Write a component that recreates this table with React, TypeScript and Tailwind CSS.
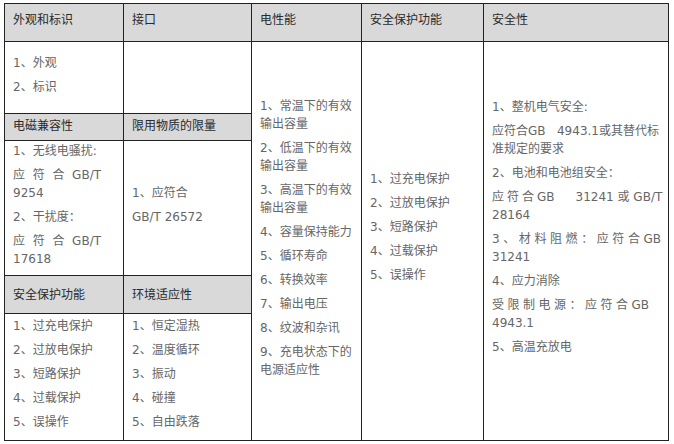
import type { ReactNode } from "react";

type Line = { text: ReactNode; cls?: string };
type Para = Line[];

const l = (text: ReactNode, cls?: string): Line => ({ text, cls });

const col3: Para[] = [
  [l("1、常温下的有效"), l("输出容量")],
  [l("2、低温下的有效"), l("输出容量")],
  [l("3、高温下的有效"), l("输出容量")],
  [l("4、容量保持能力")],
  [l("5、循环寿命")],
  [l("6、转换效率")],
  [l("7、输出电压")],
  [l("8、纹波和杂讯")],
  [l("9、充电状态下的"), l("电源适应性")],
];

const protect: Para[] = [
  [l("1、过充电保护")],
  [l("2、过放电保护")],
  [l("3、短路保护")],
  [l("4、过载保护")],
  [l("5、误操作")],
];

const env: Para[] = [
  [l("1、恒定湿热")],
  [l("2、温度循环")],
  [l("3、振动")],
  [l("4、碰撞")],
  [l("5、自由跌落")],
];

const emc: Para[] = [
  [l("1、无线电骚扰:")],
  [l("应符合GB/T", "w-[88px] [text-align-last:justify]"), l("9254")],
  [l("2、干扰度：")],
  [l("应符合GB/T", "w-[88px] [text-align-last:justify]"), l("17618")],
];

const safety: Para[] = [
  [l("1、整机电气安全:")],
  [l("应符合GB\u00a0\u00a0\u00a04943.1或其替代标"), l("准规定的要求")],
  [l("2、电池和电池组安全：")],
  [
    l(
      <>
        <span className="tracking-[3px]">应符合</span>GB
        <span className="inline-block w-[21px]" />
        31241 或 GB/T
      </>,
    ),
    l("28164"),
  ],
  [l("3、材料阻燃：应符合GB", "w-[169px] [text-align-last:justify]"), l("31241")],
  [l("4、应力消除")],
  [l("受限制电源：应符合GB", "w-[157px] [text-align-last:justify]"), l("4943.1")],
  [l("5、高温充放电")],
];

function Paras({ items }: { items: Para[] }) {
  return (
    <div>
      {items.map((p, i) => (
        <div key={i} className="mb-[6px]">
          {p.map((ln, j) => (
            <div key={j} className={`whitespace-nowrap leading-[18px] ${ln.cls ?? ""}`}>
              {ln.text}
            </div>
          ))}
        </div>
      ))}
    </div>
  );
}

function Head({ children, extra = "" }: { children: string; extra?: string }) {
  return (
    <div className={`flex items-center bg-[#d9d9d9] pl-2 text-[#2a2a2a] ${extra}`}>{children}</div>
  );
}

function Cell({ children, extra = "" }: { children?: ReactNode; extra?: string }) {
  return <div className={`flex items-center bg-white pl-2 ${extra}`}>{children}</div>;
}

export default function App() {
  return (
    <div className="h-[444px] w-[674px] bg-white pl-[4px] pt-[3px] font-['DejaVu_Sans','Noto_Sans_CJK_SC',sans-serif] text-[12px] text-[#666]">
      <div className="grid w-fit grid-cols-[118px_127px_109px_121px_184px] grid-rows-[37px_71px_26px_134px_37px_126px] gap-px bg-[#222] p-px">
        <Head extra="pb-[5px]">外观和标识</Head>
        <Head extra="pb-[5px]">接口</Head>
        <Head extra="pb-[5px]">电性能</Head>
        <Head extra="pb-[5px]">安全保护功能</Head>
        <Head extra="pb-[5px]">安全性</Head>

        <Cell>
          <Paras items={[[l("1、外观")], [l("2、标识")]]} />
        </Cell>
        <Cell />
        <Cell extra="row-span-5">
          <Paras items={col3} />
        </Cell>
        <Cell extra="row-span-5 pb-[23px]">
          <Paras items={protect} />
        </Cell>
        <Cell extra="row-span-5 pb-[23px]">
          <Paras items={safety} />
        </Cell>

        <Head extra="pb-[3px]">电磁兼容性</Head>
        <Head extra="pb-[3px]">限用物质的限量</Head>

        <Cell>
          <Paras items={emc} />
        </Cell>
        <Cell>
          <Paras items={[[l("1、应符合")], [l("GB/T 26572")]]} />
        </Cell>

        <Head>安全保护功能</Head>
        <Head>环境适应性</Head>

        <Cell>
          <Paras items={protect} />
        </Cell>
        <Cell>
          <Paras items={env} />
        </Cell>
      </div>
    </div>
  );
}
